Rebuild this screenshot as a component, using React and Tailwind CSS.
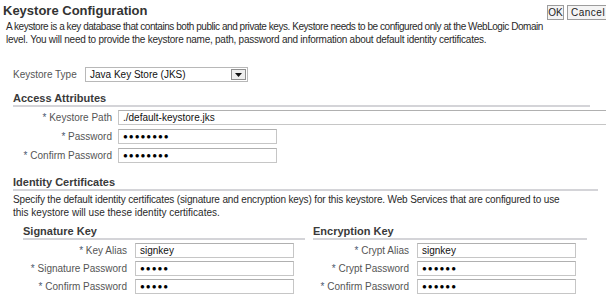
import React from 'react';

function Dots({ n }) {
  return <span className="text-[8px] tracking-[1px] text-black">{'●'.repeat(n)}</span>;
}

function Row({ label, labelW, children, inputW = 'w-[159px]', className = '' }) {
  return (
    <div className={`flex items-center h-[18px] ${className}`}>
      <div className={`${labelW} shrink-0 text-right text-[#555] whitespace-nowrap`}>
        <span className="text-[#4a5a70]">*</span> {label}
      </div>
      <div className={`${inputW} h-[15px] shrink-0 border border-[#c6c6c6] border-t-[#b0b0b0] bg-white flex items-center px-[4px] text-[#111] whitespace-nowrap`}>
        {children}
      </div>
    </div>
  );
}

function SectionHead({ children, className = '' }) {
  return (
    <div className={`font-bold text-[#3a3a3a] text-[11px] leading-[13px] h-[15px] border-b-2 border-[#d4d4d8] ${className}`}>
      {children}
    </div>
  );
}

export default function App() {
  return (
    <div className="w-[606px] h-[308px] overflow-hidden bg-white text-[10px] leading-[13px] text-[#2a2a2a] font-['Liberation_Sans',Arial,sans-serif]">
      <div className="w-[650px]">
        {/* title and buttons */}
        <div className="flex pl-[3px] pt-[3px] h-[20px]">
          <h1 className="w-[544px] text-[13px] leading-[16px] font-bold text-[#333]">Keystore Configuration</h1>
          <div className="flex gap-[3px] pt-[2px]">
            <button className="w-[17px] h-[15px] border border-[#9c9c9c] bg-[#f4f4f4] text-[10px] leading-[13px] text-[#222] flex items-center justify-center">OK</button>
            <button className="h-[15px] pl-[3px] pr-[3px] border border-[#9c9c9c] bg-[#f4f4f4] text-[10px] leading-[13px] text-[#222] tracking-[0.5px]">Cancel</button>
          </div>
        </div>
        <p className="pl-[6px] whitespace-nowrap">
          <span className="tracking-[-0.45px]">
            A keystore is a key database that contains both public and private keys. Keystore needs to be configured only at the WebLogic Domain
          </span>
          <br />
          <span className="tracking-[-0.25px]">
            level. You will need to provide the keystore name, path, password and information about default identity certificates.
          </span>
        </p>

        {/* keystore type */}
        <div className="flex items-center pl-[13px] mt-[21px] h-[15px]">
          <span className="w-[72px] text-[#555]">Keystore Type</span>
          <div className="w-[163px] h-[15px] border border-[#b8b8b8] flex items-center justify-between pl-[4px] pr-[1px]">
            <span className="text-[#111]">Java Key Store (JKS)</span>
            <span className="w-[15px] h-[11px] border border-[#8f8f8f] bg-[#eeeeee] flex items-center justify-center">
              <svg width="7" height="4" viewBox="0 0 7 4"><path d="M0 0h7L3.5 4z" fill="#111" /></svg>
            </span>
          </div>
        </div>

        {/* access attributes */}
        <SectionHead className="ml-[13px] w-[577px] mt-[10px]">Access Attributes</SectionHead>
        <div className="pl-[13px] mt-[1px] flex flex-col gap-[1px]">
          <Row label="Keystore Path" labelW="w-[105px] pr-[6px]" inputW="w-[520px]">./default-keystore.jks</Row>
          <Row label="Password" labelW="w-[105px] pr-[6px]"><Dots n={8} /></Row>
          <Row label="Confirm Password" labelW="w-[105px] pr-[6px]"><Dots n={8} /></Row>
        </div>

        {/* identity certificates */}
        <SectionHead className="ml-[13px] w-[585px] mt-[12px]">Identity Certificates</SectionHead>
        <p className="pl-[13px] mt-[2px] whitespace-nowrap">
          <span className="tracking-[-0.15px]">
            Specify the default identity certificates (signature and encryption keys) for this keystore. Web Services that are configured to use
          </span>
          <br />
          this keystore will use these identity certificates.
        </p>

        <div className="flex mt-[6px] pl-[23px]">
          <div className="w-[282px]">
            <SectionHead>Signature Key</SectionHead>
            <div className="flex flex-col mt-[1px]">
              <Row label="Key Alias" labelW="w-[112px] pr-[8px]">signkey</Row>
              <Row label="Signature Password" labelW="w-[112px] pr-[8px]"><Dots n={5} /></Row>
              <Row label="Confirm Password" labelW="w-[112px] pr-[8px]"><Dots n={5} /></Row>
            </div>
          </div>
          <div className="w-[274px] ml-[8px]">
            <SectionHead>Encryption Key</SectionHead>
            <div className="flex flex-col mt-[1px]">
              <Row label="Crypt Alias" labelW="w-[104px] pr-[8px]">signkey</Row>
              <Row label="Crypt Password" labelW="w-[104px] pr-[8px]"><Dots n={6} /></Row>
              <Row label="Confirm Password" labelW="w-[104px] pr-[8px]"><Dots n={6} /></Row>
            </div>
          </div>
        </div>
      </div>
    </div>
  );
}
